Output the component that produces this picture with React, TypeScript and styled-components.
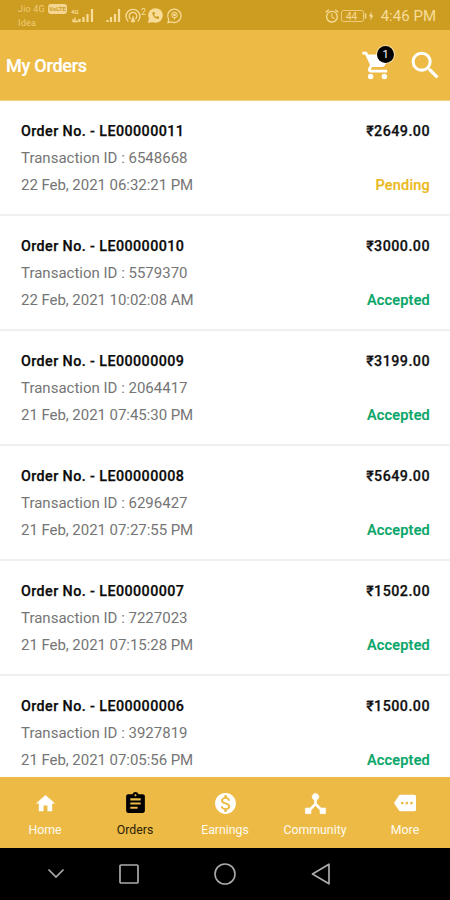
import React from "react";
import styled, { createGlobalStyle } from "styled-components";
import {
  MdAlarm,
  MdAssignment,
  MdHome,
  MdMonetizationOn,
  MdMore,
  MdSearch,
} from "react-icons/md";

const GlobalStyle = createGlobalStyle`
  * { box-sizing: border-box; }
  body { margin: 0; background: #fff; font-family: Roboto, sans-serif; }
  svg { display: block; flex: none; }
`;

const Screen = styled.div`
  width: 450px;
  height: 900px;
  display: flex;
  flex-direction: column;
  overflow: hidden;
  background: #fff;
`;

const StatusBar = styled.div`
  height: 30px;
  flex: none;
  display: flex;
  justify-content: space-between;
  padding: 0 14px 0 18px;
  background: #cd9d21;
  color: #f8dc98;
`;

const StatusGroup = styled.div`
  display: flex;
  align-items: center;
  padding-top: 2px;
`;

const Carrier = styled.div`
  display: flex;
  flex-direction: column;
  width: 53px;
  font-size: 9px;
  line-height: 14px;
  letter-spacing: 0.2px;
  color: #efcb78;
`;

const CarrierLine = styled.div`
  display: flex;
  align-items: center;
  gap: 3px;
  height: 14px;
`;

const VolteTag = styled.span`
  width: 19px;
  height: 10px;
  border-radius: 3px;
  background: #f4d591;
  color: #cd9d21;
  font-size: 6px;
  line-height: 10px;
  font-weight: 700;
  letter-spacing: 0;
  text-align: center;
`;

const Clock = styled.span`
  font-size: 15px;
  margin-left: 5px;
  letter-spacing: 0.02px;
`;

const Header = styled.header`
  height: 71px;
  flex: none;
  display: flex;
  align-items: flex-start;
  padding: 17px 6px 0;
  background: #ecba45;
  border-bottom: 1px solid #eed383;
  color: #fff;
`;

const Title = styled.h1`
  flex: 1;
  margin: 0;
  font-size: 18px;
  font-weight: 500;
  line-height: 38px;
  letter-spacing: -0.25px;
  -webkit-text-stroke: 0.2px;
`;

const CartButton = styled.div`
  position: relative;
  width: 33px;
  margin: 2px 13px 0 0;
`;

const Badge = styled.span`
  position: absolute;
  top: -3px;
  left: 16px;
  width: 17px;
  height: 17px;
  border-radius: 50%;
  background: #000;
  box-shadow: 0 0 0 1px rgba(255, 255, 255, 0.55);
  font-size: 11px;
  line-height: 17px;
  text-align: center;
`;

const OrderList = styled.main`
  height: 676px;
  flex: none;
  overflow: hidden;
`;

const OrderRow = styled.article`
  height: 115px;
  display: flex;
  justify-content: space-between;
  padding: 17px 20px 0 21px;
  border-bottom: 2px solid #f0f0f0;
`;

const Column = styled.div<{ $end?: boolean }>`
  display: flex;
  flex-direction: column;
  justify-content: ${(p) => (p.$end ? "space-between" : "flex-start")};
  align-items: ${(p) => (p.$end ? "flex-end" : "flex-start")};
  height: 81px;
  font-size: 15px;
  line-height: 27px;
  white-space: nowrap;
`;

const OrderNumber = styled.span`
  height: 27px;
  font-size: 14.3px;
  font-weight: 500;
  letter-spacing: 0.42px;
  color: #0a0a0a;
  -webkit-text-stroke: 0.25px;
`;

const Detail = styled.span<{ $spacing: number }>`
  color: #757575;
  letter-spacing: ${(p) => p.$spacing}px;
`;

const Amount = styled.span`
  height: 27px;
  font-size: 14.3px;
  font-weight: 500;
  letter-spacing: 0.45px;
  color: #111;
  -webkit-text-stroke: 0.25px;
`;

const Status = styled.span<{ $pending: boolean }>`
  font-size: 14.5px;
  font-weight: 500;
  letter-spacing: 0.2px;
  color: ${(p) => (p.$pending ? "#ebb91d" : "#08a568")};
  -webkit-text-stroke: 0.2px;
`;

const TabBar = styled.nav`
  height: 71px;
  flex: none;
  display: grid;
  grid-template-columns: repeat(5, 1fr);
  background: #ecba45;
`;

const Tab = styled.div<{ $active: boolean }>`
  display: flex;
  flex-direction: column;
  align-items: center;
  padding-top: 12px;
  font-size: 12.3px;
  line-height: 16px;
  color: ${(p) => (p.$active ? "#2b2105" : "#fffaf0")};
`;

const TabIcon = styled.span<{ $active: boolean }>`
  height: 28px;
  display: flex;
  align-items: center;
  margin-bottom: 5px;
  color: ${(p) => (p.$active ? "#000" : "#fff")};
`;

const SystemNav = styled.div`
  flex: 1;
  display: grid;
  grid-template-columns: 112px 34px 158px 34px;
  align-items: center;
  justify-items: center;
  background: #000;
`;

type IconProps = { size: number };

const CommunityIcon = ({ size }: IconProps) => (
  <svg width={size} height={size} viewBox="0 0 24 24" fill="currentColor" stroke="currentColor" strokeWidth="0.5">
    <path d="M17 16l-4-4V8.820C14.160 8.400 15 7.300 15 6c0-1.660-1.340-3-3-3S9 4.340 9 6c0 1.300.84 2.400 2 2.820V12l-4 4H3v5h5v-3.050l4-4.200 4 4.200V21h5v-5z" />
  </svg>
);

const CartIcon = ({ size }: IconProps) => (
  <svg width={size} height={size} viewBox="0 0 24 24" fill="currentColor">
    <circle cx="7" cy="20" r="2" />
    <circle cx="17" cy="20" r="2" />
    <path d="M1 2v2h2l3.600 7.590-1.350 2.450C4.520 15.370 5.480 17 7 17h12v-2H7.420c-.14 0-.25-.11-.25-.25l.03-.12.9-1.630h7.450c.75 0 1.410-.41 1.750-1.030l3.580-6.490A1 1 0 0 0 20 4H5.210l-.94-2z" />
  </svg>
);

const StatusIcons = () => (
  <svg width="112" height="20" viewBox="71 6 112 20" fill="none" stroke="currentColor">
    <g strokeWidth="2.2">
      <path d="M79.5 22v-3M83.5 22v-5M87.5 22v-8M92 22V9" />
      <path d="M107.500 22v-2M111 22v-5M115 22v-8M119 22V9" />
    </g>
    <path d="M73 19v2.500h5M75 17.500v4" strokeWidth="1.3" />
    <text x="71" y="14" fontSize="6" fontWeight="700" fill="currentColor" stroke="none">4G</text>
    <g strokeWidth="1.3">
      <path d="M128.300 21.500a7 7 0 1 1 9.400 0M130.500 19a3.800 3.800 0 1 1 5 0" />
      <path d="M133 16l-2 6h4z" fill="currentColor" strokeWidth=".4" />
    </g>
    <text x="141" y="14.500" fontSize="9" fill="currentColor" stroke="none">2</text>
    <circle cx="155.500" cy="15.500" r="7.300" fill="currentColor" stroke="none" />
    <path d="M149 18l-1 5 5-1z" fill="currentColor" stroke="none" />
    <path d="M152.500 12.300c-.5 3.500 2.300 6.700 6 6.600l.8-2-2-1-1.200 1c-1-.4-1.700-1.200-2-2.200l1-1-.7-2z" fill="#cd9d21" stroke="none" />
    <path d="M168.700 19.500a6.700 6.700 0 1 1 2.500 2.300l-3.200.9z" strokeWidth="1.200" />
    <circle cx="174.500" cy="15" r="2.800" strokeWidth="1" />
    <circle cx="174.500" cy="15" r="1.400" fill="currentColor" stroke="none" />
    <path d="M174.500 17.500v2" strokeWidth="1" />
  </svg>
);

const Battery = () => (
  <svg width="36" height="14" viewBox="0 0 36 14" fill="none" stroke="currentColor">
    <rect x="1.500" y="1.500" width="22" height="11" rx="2" strokeWidth="1" strokeOpacity=".75" />
    <path d="M25.500 4.500v5" strokeWidth="1.500" />
    <text x="6" y="10.800" fontSize="10" fill="currentColor" stroke="none">44</text>
    <path d="M31.600 2.500l-2.800 5h2l-.4 4 3-5.200h-2z" fill="currentColor" stroke="none" />
  </svg>
);

const orders = [
  ["LE00000011", "6548668", "22 Feb, 2021 06:32:21 PM", "₹2649.00", "Pending"],
  ["LE00000010", "5579370", "22 Feb, 2021 10:02:08 AM", "₹3000.00", "Accepted"],
  ["LE00000009", "2064417", "21 Feb, 2021 07:45:30 PM", "₹3199.00", "Accepted"],
  ["LE00000008", "6296427", "21 Feb, 2021 07:27:55 PM", "₹5649.00", "Accepted"],
  ["LE00000007", "7227023", "21 Feb, 2021 07:15:28 PM", "₹1502.00", "Accepted"],
  ["LE00000006", "3927819", "21 Feb, 2021 07:05:56 PM", "₹1500.00", "Accepted"],
];

const tabs: { label: string; Icon: React.ComponentType<IconProps>; size: number }[] = [
  { label: "Home", Icon: MdHome, size: 23 },
  { label: "Orders", Icon: MdAssignment, size: 25 },
  { label: "Earnings", Icon: MdMonetizationOn, size: 25 },
  { label: "Community", Icon: CommunityIcon, size: 27 },
  { label: "More", Icon: MdMore, size: 22 },
];

export default function App() {
  return (
    <Screen>
      <GlobalStyle />
      <StatusBar>
        <StatusGroup>
          <Carrier>
            <CarrierLine>Jio 4G <VolteTag>VoLTE</VolteTag></CarrierLine>
            <CarrierLine>Idea</CarrierLine>
          </Carrier>
          <StatusIcons />
        </StatusGroup>
        <StatusGroup>
          <MdAlarm size={16} />
          <Battery />
          <Clock>4:46 PM</Clock>
        </StatusGroup>
      </StatusBar>
      <Header>
        <Title>My Orders</Title>
        <CartButton>
          <CartIcon size={33} />
          <Badge>1</Badge>
        </CartButton>
        <MdSearch size={37} />
      </Header>
      <OrderList>
        {orders.map(([number, transaction, date, amount, status]) => (
          <OrderRow key={number}>
            <Column>
              <OrderNumber>Order No. - {number}</OrderNumber>
              <Detail $spacing={0}>Transaction ID : {transaction}</Detail>
              <Detail $spacing={-0.05}>{date}</Detail>
            </Column>
            <Column $end>
              <Amount>{amount}</Amount>
              <Status $pending={status === "Pending"}>{status}</Status>
            </Column>
          </OrderRow>
        ))}
      </OrderList>
      <TabBar>
        {tabs.map(({ label, Icon, size }) => (
          <Tab key={label} $active={label === "Orders"}>
            <TabIcon $active={label === "Orders"}>
              <Icon size={size} />
            </TabIcon>
            {label}
          </Tab>
        ))}
      </TabBar>
      <SystemNav>
        <svg width="18" height="12" viewBox="0 0 18 12" fill="none" stroke="#aaa" strokeWidth="1.700">
          <path d="M1.500 1.500L9 9l7.500-7.500" />
        </svg>
        <svg width="20" height="20" viewBox="0 0 20 20" fill="none" stroke="#aaa" strokeWidth="1.700">
          <rect x="1" y="1" width="18" height="18" rx="1" />
        </svg>
        <svg width="22" height="22" viewBox="0 0 22 22" fill="none" stroke="#aaa" strokeWidth="1.600">
          <circle cx="11" cy="11" r="10" />
        </svg>
        <svg width="20" height="22" viewBox="0 0 20 22" fill="none" stroke="#aaa" strokeWidth="1.700" strokeLinejoin="round">
          <path d="M18 1.200v19.600L1.500 11z" />
        </svg>
      </SystemNav>
    </Screen>
  );
}
